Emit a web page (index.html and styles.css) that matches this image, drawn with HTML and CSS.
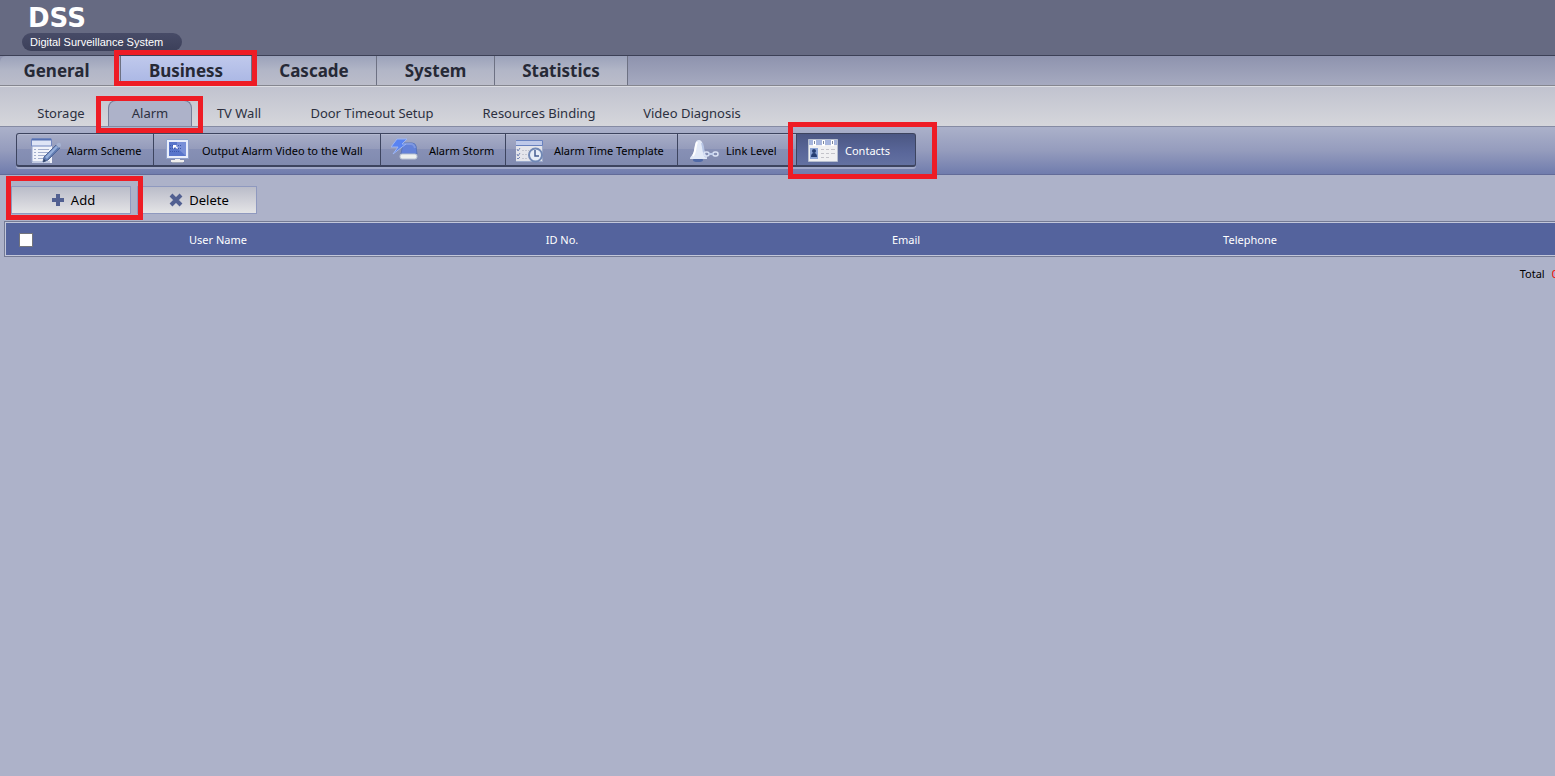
FILE: index.html
```
<!DOCTYPE html>
<html lang="en">
<head>
<meta charset="utf-8">
<title>DSS - Contacts</title>
<link rel="stylesheet" href="styles.css">
</head>
<body>
<header class="brand">
  <h1 class="brand-name">DSS</h1>
  <p class="brand-tag">Digital Surveillance System</p>
</header>

<nav class="main-nav" aria-label="Main">
  <a class="main-tab main-tab-first" href="#">General</a>
  <a class="main-tab main-tab-active" href="#">Business<span class="mark mark-main"></span></a>
  <a class="main-tab main-tab-cascade" href="#">Cascade</a>
  <a class="main-tab main-tab-system" href="#">System</a>
  <a class="main-tab main-tab-last" href="#">Statistics</a>
</nav>

<nav class="sub-nav" aria-label="Business">
  <a class="sub-tab" href="#">Storage</a>
  <a class="sub-tab sub-tab-active" href="#">Alarm<span class="mark mark-sub"></span></a>
  <a class="sub-tab" href="#">TV Wall</a>
  <a class="sub-tab sub-tab-door" href="#">Door Timeout Setup</a>
  <a class="sub-tab sub-tab-binding" href="#">Resources Binding</a>
  <a class="sub-tab sub-tab-video" href="#">Video Diagnosis</a>
</nav>

<div class="toolbar">
  <div class="tools">
    <button class="tool tool-scheme" type="button">
      <svg class="tool-icon" viewBox="0 0 38 32" aria-hidden="true">
        <path d="M3 5h20v24H3z" fill="#f1f3fa"/>
        <path d="M2.500 5h20v7h-20z" fill="#dfe5f6" stroke="#7186c0"/>
        <path d="M3 5.500h19" stroke="#5570b2" stroke-width="2"/>
        <path d="M3 12v16h18" fill="none" stroke="#93a2ca"/>
        <path d="M5 15.500h2m2 0h11M5 18.500h2m2 0h10M5 21.500h2m2 0h8M5 24.500h2m2 0h6" stroke="#a3aecd"/>
        <path d="M14 28l1-5L27 11l4 3-12 12z" fill="#607bb1" stroke="#506697"/>
        <path d="M16 23l11-11 2 1-11 12z" fill="#94aeda"/>
        <path d="M27 11l2-2q3-1 3 3l-2 2z" fill="#a5b2d1"/>
        <path d="M14 28l1-3 2 2z" fill="#30405f"/>
      </svg><span>Alarm Scheme</span>
    </button>
    <button class="tool tool-output" type="button">
      <svg class="tool-icon" viewBox="1 0 38 32" aria-hidden="true">
        <path d="M3.500 5.500h22v19h-22z" fill="#e9eefb" stroke="#8fa0cb"/>
        <path d="M6 8h17v14H6z" fill="#5875cb"/>
        <path d="M14 8h9v14l-9-8z" fill="#7990d8"/>
        <path d="M7 11.500h12M7 14.500h11M7 17.500h9" stroke="#3c58ac" stroke-dasharray="1 1"/>
        <path d="M10 11h4l-1 1 2 2-1 1-2-2-2 2z" fill="#fff"/>
        <path d="M12 25h5v1h4v2H8v-2h4z" fill="#f0efed"/>
        <path d="M9 28.500h11" stroke="#a2a8b7"/>
      </svg><span>Output Alarm Video to the Wall</span>
    </button>
    <button class="tool tool-storm" type="button">
      <svg class="tool-icon" viewBox="2 0 38 32" aria-hidden="true">
        <path d="M12 20l2-11h9q3 0 4 3l1 8z" fill="#6381d9" stroke="#5874b9"/>
        <path d="M17 10h5q3 0 4 4" fill="none" stroke="#7f98e0" stroke-width="2"/>
        <rect x="11" y="20" width="17" height="5" rx="2" fill="#edf0ef" stroke="#b9c2d4"/>
        <path d="M8 5h10l-5 5h4L4 20l5-7H2z" fill="#5983f1" stroke="#9db5f2"/>
      </svg><span>Alarm Storm</span>
    </button>
    <button class="tool tool-time" type="button">
      <svg class="tool-icon" viewBox="2 0 38 32" aria-hidden="true">
        <path d="M.500 6.500h28v21H.500z" fill="#e4e5eb" stroke="#9ba9ca"/>
        <path d="M.500 6.500h28v5H.500z" fill="#bec9e9" stroke="#6881be"/>
        <path d="M3 15l1 2 2-3m-3 6l1 2 2-3m-3 5l1 1 2-2" fill="none" stroke="#7486b8"/>
        <path d="M8 16.500h7M8 20.500h6M8 24.500h6" stroke="#c3c5cf" stroke-dasharray="2 1"/>
        <circle cx="21.500" cy="21" r="6.500" fill="#e6edf7" stroke="#7188b5" stroke-width="2"/>
        <path d="M21 16v6h4" fill="none" stroke="#455d91" stroke-width="1.500"/>
      </svg><span>Alarm Time Template</span>
    </button>
    <button class="tool tool-link" type="button">
      <svg class="tool-icon" viewBox="1 0 38 32" aria-hidden="true">
        <ellipse cx="11" cy="26" rx="5" ry="2" fill="#5069a6"/>
        <path d="M3 25c0-3 3-3 4-8C8 9 9 6 12 6s4 4 5 10c1 5 3 5 3 9z" fill="#e3eaf8"/>
        <path d="M10 8c-2 5-1 10-4 14" fill="none" stroke="#fff" stroke-width="2"/>
        <path d="M15 9c2 6 1 11 4 14" fill="none" stroke="#b6c4e4" stroke-width="2"/>
        <rect x="17" y="18" width="5" height="4" rx="2" fill="none" stroke="#dce4f6" stroke-width="1.500"/>
        <rect x="26" y="18" width="5" height="4" rx="2" fill="none" stroke="#dce4f6" stroke-width="1.500"/>
        <path d="M21 20h6" stroke="#c3d0ed" stroke-width="2"/>
      </svg><span>Link Level</span>
    </button>
    <button class="tool tool-active" type="button">
      <svg class="tool-icon" viewBox="0 0 38 32" aria-hidden="true">
        <path d="M1.500 5.500h29v22h-29z" fill="#f0f0f2" stroke="#b7bfcf"/>
        <path d="M2 6h28v5H2z" fill="#a5b4dc"/>
        <path d="M3 14h8v11H3z" fill="#8da5d6"/>
        <circle cx="7" cy="17" r="2" fill="#263e73"/>
        <path d="M4 23q0-4 3-4t3 4z" fill="#263e73"/>
        <path d="M14 15.500h3m2 0h3m2 0h4M14 19.500h3m2 0h3m2 0h4M14 23.500h3m2 0h3" stroke="#c3c3ca"/>
        <path d="M7.500 6v6m9-6v6m9-6v6" stroke="#fff" stroke-width="3"/>
        <path d="M7.500 7v3m9-3v3m9-3v3" stroke="#7d879c"/>
      </svg><span>Contacts</span><span class="mark mark-tool"></span>
    </button>
  </div>
</div>

<main class="content">
  <div class="actions">
    <button class="action" type="button">
      <svg class="action-icon" viewBox="0 0 14 14" aria-hidden="true"><path d="M7 1v12M1 7h12" stroke="#526091" stroke-width="4"/></svg>
      <span>Add</span><span class="mark mark-action"></span>
    </button>
    <button class="action" type="button">
      <svg class="action-icon" viewBox="0 0 14 14" aria-hidden="true"><path d="M2 2l10 10M12 2L2 12" stroke="#526091" stroke-width="4"/></svg>
      <span>Delete</span>
    </button>
  </div>
  <div class="grid">
    <table class="contacts">
      <thead>
        <tr>
          <th class="col-check"><input class="check" type="checkbox" aria-label="Select all"></th>
          <th class="col-data" scope="col">User Name</th>
          <th class="col-data" scope="col">ID No.</th>
          <th class="col-data" scope="col">Email</th>
          <th class="col-data" scope="col">Telephone</th>
          <td></td>
        </tr>
      </thead>
    </table>
  </div>
  <p class="total">Total <span class="total-count">0</span></p>
</main>
</body>
</html>
```
FILE: styles.css
```
* {
  box-sizing: border-box;
}

body {
  margin: 0;
  min-height: 100vh;
  overflow: hidden;
  background: #adb2c9;
  color: #000;
  font-family: "Noto Sans", "Open Sans", sans-serif;
  font-size: 11px;
}

a {
  color: inherit;
  text-decoration: none;
}

button {
  margin: 0;
  font: inherit;
}

.mark {
  position: absolute;
  z-index: 2;
  border: 5px solid #ee1c25;
  pointer-events: none;
}

/* Brand */
.brand {
  height: 55px;
  padding: 5px 22px 0;
  background: #666a82;
}

.brand-name {
  margin: 0;
  padding-left: 6px;
  color: #fff;
  font: bold 26px/26px "DejaVu Sans", sans-serif;
}

.brand-tag {
  width: 160px;
  margin: 2px 0 0;
  padding-left: 8px;
  border-radius: 9px;
  background: linear-gradient(#474b67, #3c405a);
  color: #fff;
  font: 11px/18px "Liberation Sans", sans-serif;
}

/* Main tabs */
.main-nav {
  display: flex;
  height: 31px;
  border-top: 1px solid #3c4056;
  border-bottom: 1px solid #85868f;
  background: linear-gradient(#8e93ae, #a6aac0);
}

.main-tab {
  position: relative;
  width: 131px;
  border-right: 1px solid #6d7183;
  background: linear-gradient(#9ba2ba, #b2b6c7 50%, #bbbdca);
  color: #262936;
  font-size: 17px;
  font-weight: bold;
  line-height: 29px;
  text-align: center;
}

.main-tab-first {
  width: 121px;
  padding-right: 7px;
  border-top-left-radius: 6px;
}

.main-tab-active {
  background: linear-gradient(#c0c9ec, #a9b6e4);
}

.main-tab-cascade {
  width: 125px;
}

.main-tab-system {
  width: 118px;
}

.main-tab-last {
  width: 133px;
}

.mark-main {
  inset: -6px -6px -1px -7px;
}

/* Second-level tabs */
.sub-nav {
  display: flex;
  align-items: flex-end;
  height: 41px;
  padding-left: 14px;
  border-top: 1px solid #dcdde3;
  border-bottom: 1px solid #858ba3;
  background: linear-gradient(#c1c3cf, #d5d6db);
}

.sub-tab {
  position: relative;
  width: 94px;
  height: 26px;
  color: #2c303f;
  font-size: 13px;
  line-height: 26px;
  text-align: center;
}

.sub-tab-active {
  width: 84px;
  border: 1px solid #777e98;
  border-bottom: 0;
  border-radius: 8px 8px 0 0;
  background: #adb2c9;
  line-height: 25px;
}

.sub-tab-door {
  width: 172px;
}

.sub-tab-binding {
  width: 162px;
}

.sub-tab-video {
  width: 144px;
}

.mark-sub {
  inset: -5px -12px -7px -13px;
}

/* Toolbar */
.toolbar {
  height: 48px;
  padding: 6px 16px;
  border-bottom: 1px solid #626b98;
  background: linear-gradient(#abb1ca, #959cbd 50%, #707cad);
}

.tools {
  display: flex;
  width: fit-content;
  border-radius: 3px;
  box-shadow: 0 2px 0 #a0a8c9;
}

.tool {
  position: relative;
  display: flex;
  align-items: center;
  height: 34px;
  padding: 1px 0 0 10px;
  border: solid #3d445f;
  border-width: 1px 1px 2px 0;
  background: linear-gradient(#a7adc7, #949bbb 50%, #8790b5 50%, #808aaf);
  box-shadow: inset 0 1px 0 #b4b9d0;
  color: #000;
  white-space: nowrap;
}

.tool-icon {
  flex: none;
  width: 38px;
  height: 32px;
}

.tool-scheme {
  width: 138px;
  padding-left: 12px;
  border-left-width: 1px;
  border-radius: 3px 0 0 3px;
}

.tool-output {
  width: 227px;
}

.tool-storm {
  width: 125px;
}

.tool-time {
  width: 172px;
}

.tool-link {
  width: 119px;
}

.tool-active {
  width: 119px;
  border-radius: 0 3px 3px 0;
  background: linear-gradient(#4b5783, #5a679a 60%, #6371a1);
  box-shadow: none;
  color: #fff;
}

.mark-tool {
  inset: -12px -22px -14px -9px;
}

/* Page content */
.content {
  padding: 11px 0 0 4px;
}

.actions {
  display: flex;
  gap: 6px;
  padding-left: 7px;
}

.action {
  position: relative;
  display: flex;
  align-items: center;
  justify-content: center;
  gap: 6px;
  width: 120px;
  height: 28px;
  padding: 0 0 0 4px;
  border: 1px solid #8f99bf;
  background: linear-gradient(#babcc9, #e4e4e6);
  color: #000;
  font-size: 13px;
}

.action-icon {
  width: 14px;
  height: 14px;
}

.mark-action {
  inset: -11px -13px -7px -6px;
}

.grid {
  width: calc(100% + 45px);
  margin-top: 7px;
  padding: 1px;
  border: 1px solid #747a94;
  background: #c3c7da;
}

.contacts {
  width: 100%;
  table-layout: fixed;
  border-collapse: collapse;
  background: #54639d;
  color: #fff;
}

.contacts th,
.contacts td {
  height: 32px;
  padding: 0;
  font-weight: normal;
  text-align: center;
}

.contacts .col-check {
  width: 40px;
}

.contacts .col-data {
  width: 344px;
}

.check {
  display: block;
  width: 14px;
  height: 14px;
  margin: 2px auto 0;
  border: 1px solid #73747c;
  background: #fff;
  appearance: none;
}

.check:checked {
  background: #303c6e;
}

.total {
  display: flex;
  justify-content: flex-end;
  gap: 7px;
  margin: 9px -3px 0 0;
  line-height: 16px;
}

.total-count {
  color: #f00;
}
```
